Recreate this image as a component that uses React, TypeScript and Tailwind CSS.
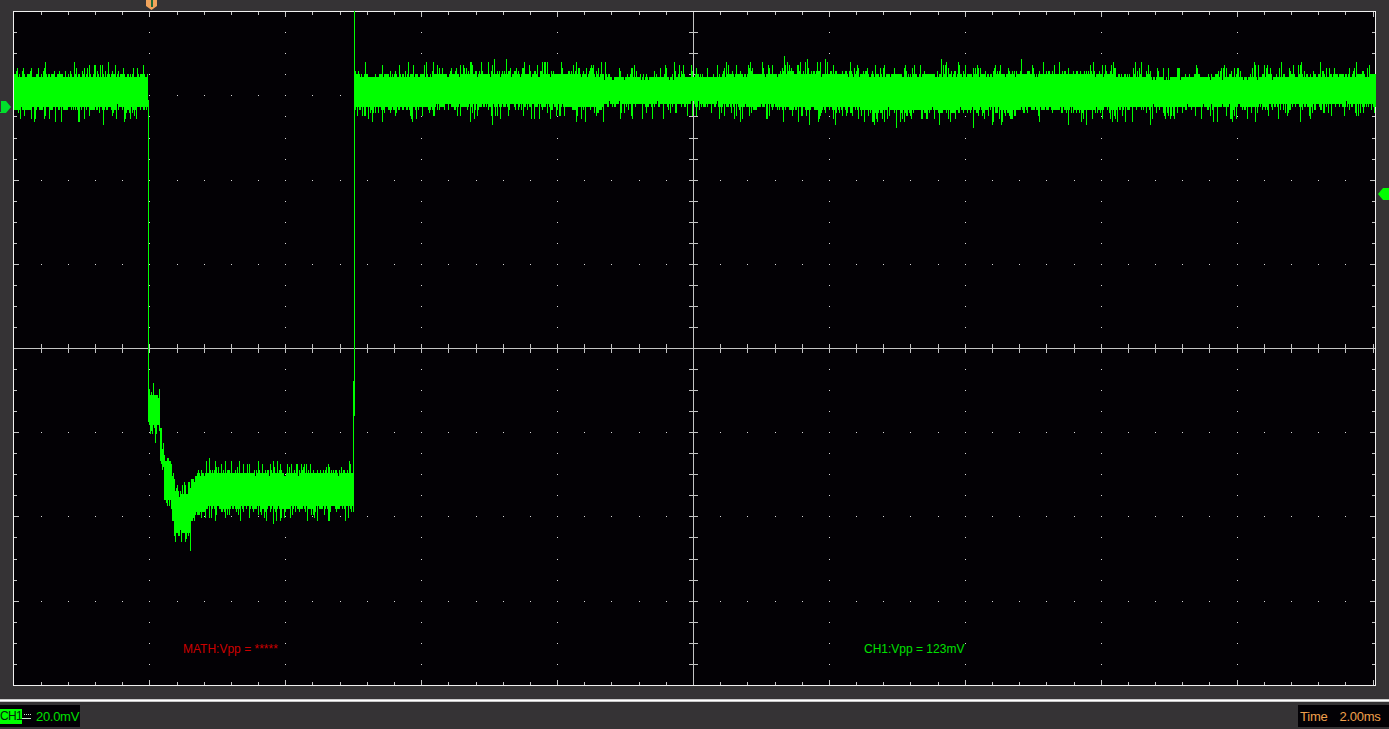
import React, { useMemo } from "react";

const W = 1363;
const H = 675;
const CX = 693 - 13;
const CY = 348 - 11;
const DX = 27.18;
const DY = 21.05;

function rng(seed: number) {
  let s = seed;
  return () => {
    s = (s * 1664525 + 1013904223) >>> 0;
    let t = s ^ (s >>> 15);
    t = Math.imul(t, 0x2c1b3c6d) >>> 0;
    t = (t ^ (t >>> 12)) >>> 0;
    return t / 4294967296;
  };
}

function buildTrace() {
  const r = rng(20240611);
  const q = (v: number) => Math.round(v / 3) * 3;
  const gauss = () => (r() + r() + r() - 1.5) * 1.15;
  const parts: string[] = [];
  const seg = (x: number, a: number, b: number) => {
    parts.push(`M${x + 0.5} ${a}V${b}`);
  };
  const teeth = (
    x: number,
    top: number,
    bot: number,
    spike: number,
    spikeAmp: number,
  ) => {
    let a = top - Math.abs(gauss()) * 3.6 + r() * 3.5;
    let b = bot + Math.abs(gauss()) * 4 - r() * 3;
    if (r() < spike) a -= 3 + r() * spikeAmp;
    if (r() < spike) b += 3 + r() * spikeAmp * 1.2;
    seg(x, q(a), q(b));
  };
  // upper trace: absolute y minus plot offset 11
  const upper = (px: number) => {
    const wob = 1.6 * Math.sin(px / 130) + 1.2 * Math.sin(px / 47 + 1);
    let half = 16.5;
    if (px > 600 && px < 720) half = 14;
    if (px > 780 && px < 1100) half = 18;
    if (px > 1150) half = 15;
    const c = 91 + wob * 0.35;
    return [c - half + wob * 0.2, c + half + wob * 0.3] as const;
  };
  for (let px = 14; px < 148; px++) {
    const [a, b] = upper(px);
    teeth(px - 13, a - 11, b - 11, 0.24, 9);
  }
  for (let px = 355; px < 1376; px++) {
    const [a, b] = upper(px);
    teeth(px - 13, a - 11, b - 11, 0.24, 10);
  }
  // falling and rising edges
  seg(148 - 13, 100 - 11, 420 - 11);
  seg(354 - 13, 0, 416 - 11);
  // lower pulse, px -> [top, bottom]
  const low = (px: number): [number, number, number, number] => {
    if (px < 149) return [380, 420, 0.1, 4];
    if (px < 160) return [394, 426, 0.3, 11];
    if (px < 162) return [429, 464, 0, 0];
    if (px < 164) return [446, 469, 0.1, 4];
    if (px < 172) return [461, 500, 0.4, 7];
    if (px < 174) return [476, 522, 0.1, 5];
    if (px < 191) return [495, 532, 0.4, 12];
    if (px < 195) return [482, 519, 0.2, 5];
    if (px < 205) return [475, 514, 0.3, 5];
    return [472, 508, 0.28, 9];
  };
  for (let px = 148; px < 353; px++) {
    const [a, b, s, amp] = low(px);
    teeth(px - 13, a - 11, b - 11, s, amp);
  }
  seg(353 - 13, 381 - 11, 512 - 11);
  return parts.join("");
}

function buildGrid() {
  const ticks: string[] = [];
  const dots: string[] = [];
  const xs: number[] = [];
  const ys: number[] = [];
  for (let i = -25; i <= 25; i++) xs.push(Math.round(CX + i * DX));
  for (let j = -16; j <= 16; j++) ys.push(Math.round(CY + j * DY));
  xs.forEach((x, i) => {
    const k = i - 25;
    if (x <= 1 || x >= W - 1) return;
    const major = k % 5 === 0;
    const len = major ? 6 : 4;
    ticks.push(`M${x + 0.5} 1V${len}M${x + 0.5} ${H - len}V${H - 1}`);
    ticks.push(`M${x + 0.5} ${CY - 4}V${CY + 5}`);
    ys.forEach((y, j) => {
      const m = j - 16;
      if (y <= 1 || y >= H - 1) return;
      const ymajor = m % 4 === 0;
      if ((major || ymajor) && !(k === 0) && m !== 0)
        dots.push(`M${x} ${y}h1v1h-1z`);
    });
  });
  ys.forEach((y, j) => {
    const m = j - 16;
    if (y <= 1 || y >= H - 1) return;
    const len = m % 4 === 0 ? 6 : 4;
    ticks.push(`M1 ${y + 0.5}H${len}M${W - len} ${y + 0.5}H${W - 1}`);
    ticks.push(`M${CX - 4} ${y + 0.5}H${CX + 5}`);
  });
  return { ticks: ticks.join(""), dots: dots.join("") };
}

export default function App() {
  const trace = useMemo(buildTrace, []);
  const grid = useMemo(buildGrid, []);
  return (
    <div
      className="relative flex h-[729px] w-[1389px] flex-col overflow-hidden bg-[#353335]"
      style={{ fontFamily: '"Liberation Sans", Arial, sans-serif' }}
    >
      {/* trigger marker */}
      <svg className="absolute left-[145px] top-0" width="13" height="11" viewBox="0 0 13 11">
        <path d="M1 0H12V6L6.5 10L1 6Z" fill="#f0a35c" />
        <path d="M6 0H8V7H6Z" fill="#1f6a38" />
      </svg>
      {/* channel zero marker */}
      <svg className="absolute left-0 top-[101px]" width="12" height="13" viewBox="0 0 12 13">
        <path d="M1 0H6L11 6L6 12H0V11H1Z" fill="#00e02c" />
      </svg>
      {/* right marker */}
      <svg className="absolute left-[1378px] top-[187px]" width="11" height="14" viewBox="0 0 11 14">
        <path d="M0 7L5 1H11V13H5Z" fill="#00ff00" />
      </svg>

      <div className="pl-[13px] pt-[11px]">
        <div className="relative h-[675px] w-[1363px] border border-[#f0f0f0] bg-[#030105]">
          <svg
            className="absolute -left-px -top-px"
            width={W}
            height={H}
            viewBox={`0 0 ${W} ${H}`}
            shapeRendering="crispEdges"
          >
            <path d={grid.dots} fill="#d8d8d8" />
            <path d={grid.ticks} stroke="#c4c4c4" strokeWidth="1" fill="none" />
            <path d={`M1 ${CY + 0.5}H${W - 1}M${CX + 0.5} 1V${H - 1}`} stroke="#c4c4c4" strokeWidth="1" fill="none" />
            <path d={trace} stroke="#00ff00" strokeWidth="1" fill="none" />
          </svg>
          <div className="absolute left-[169px] top-[629px] text-[12px] leading-[16px] whitespace-nowrap text-[#cc0000]">
            MATH:Vpp = *****
          </div>
          <div className="absolute left-[850px] top-[629px] text-[12px] leading-[16px] whitespace-nowrap text-[#00e000]">
            CH1:Vpp = 123mV
          </div>
        </div>
      </div>

      <div className="mt-[13px] h-[3px] border-y border-[#c8c8c8] bg-white" />

      <div className="flex flex-1 items-start justify-between pt-[3px]">
        <div className="flex h-[22px] w-[80px] items-center bg-[#030105]">
          <div className="flex h-[15px] w-[22px] items-center justify-center bg-[#00ff00] text-[12px] leading-none tracking-[-0.6px] text-[#04220a]">
            <span>CH1</span>
          </div>
          <svg width="14" height="10" viewBox="0 0 14 10" shapeRendering="crispEdges">
            <path d="M0 7.5H9" stroke="#c8e8c8" fill="none" />
            <path d="M2 3.5H10" stroke="#c8e8c8" strokeDasharray="1 1" fill="none" />
          </svg>
          <span className="text-[13px] leading-none tracking-[-0.3px] text-[#00e000]">20.0mV</span>
        </div>
        <div className="flex h-[22px] w-[91px] items-center bg-[#030105] pl-[2px] text-[13px] leading-none text-[#f0a04c]">
          <span className="tracking-[-0.2px]">Time</span>
          <span className="ml-[12px] tracking-[-0.3px]">2.00ms</span>
        </div>
      </div>
    </div>
  );
}
